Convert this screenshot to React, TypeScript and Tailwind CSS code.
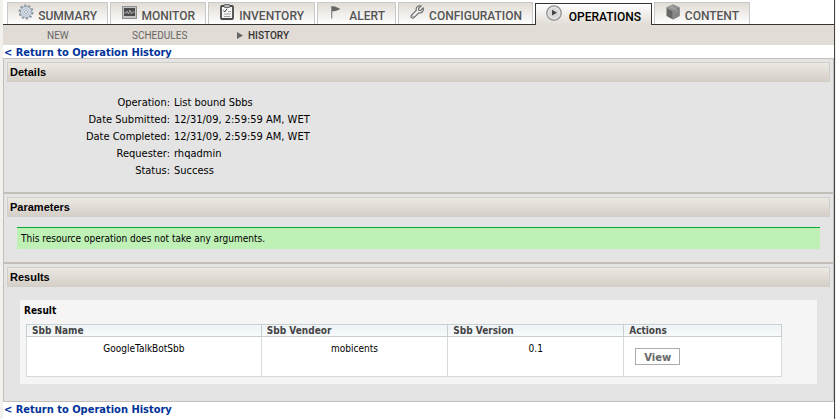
import React from "react";

type Tab = { label: string; icon: React.ReactNode; width: string; active?: boolean };

const GearIcon = () => (
  <svg width="16" height="16" viewBox="0 0 16 16" aria-hidden="true">
    <circle cx="8" cy="8" r="6.6" fill="none" stroke="#8b96a3" strokeWidth="1.8" strokeDasharray="2.4 1.747" />
    <circle cx="8" cy="8" r="5.5" fill="#d3dfec" stroke="#8893a0" strokeWidth="0.8" />
    <circle cx="8" cy="8" r="3.2" fill="#edf3f9" stroke="#a3afbc" strokeWidth="0.8" />
    <circle cx="8" cy="8" r="1.5" fill="#fff" stroke="#7f8994" strokeWidth="0.8" />
  </svg>
);

const MonitorIcon = () => (
  <svg width="15" height="13" viewBox="0 0 15 13" aria-hidden="true">
    <rect x="0.5" y="0.5" width="14" height="12" fill="#c4c4c4" stroke="#8e8e8e" />
    <rect x="2" y="2" width="11" height="8" fill="#4a4a4a" />
    <path d="M2 7h2l1-2 1.5 3L8 4l1.5 4 1-2H13" fill="none" stroke="#bdbdbd" strokeWidth="0.8" />
  </svg>
);

const ClipboardIcon = () => (
  <svg width="14" height="16" viewBox="0 0 14 16" aria-hidden="true">
    <rect x="1" y="2" width="12" height="13" rx="1" fill="#f4f4f4" stroke="#484848" strokeWidth="1.8" />
    <rect x="4" y="0.5" width="6" height="3" rx="1" fill="#b5b5b5" stroke="#555" strokeWidth="0.8" />
    <path d="M3.5 6.5l1.2 1.4L7 4.8" fill="none" stroke="#333" />
    <path d="M8 7.5h3M4 10h6.500M4 12.500h6.500" fill="none" stroke="#a0a0a0" />
  </svg>
);

const FlagIcon = () => (
  <svg width="10" height="14" viewBox="0 0 10 14" aria-hidden="true">
    <path d="M0.7 1v12.5" stroke="#858585" strokeWidth="1.2" />
    <path d="M1 1.200l3 .3 5.500 2.600L5.500 5.800 1 6.400z" fill="#666" />
  </svg>
);

const WrenchIcon = () => (
  <svg width="14" height="14" viewBox="0 0 14 14" aria-hidden="true">
    <path
      d="M11 1L8.500 3.400l.3 1.800 1.900.3L13.100 3c.5 1.500.2 3-.9 4-.9.9-2.200 1.100-3.400.8L4 12.600c-.7.7-1.800.7-2.500.1-.7-.7-.7-1.800 0-2.500L6.300 5.400C5.900 4.200 6.200 3 7.100 2 8.100 1 9.700.5 11 1z"
      fill="#f0f0f0"
      stroke="#666"
      strokeWidth="1.1"
    />
    <circle cx="2.900" cy="11.200" r="0.6" fill="#555" />
  </svg>
);

const PlayIcon = () => (
  <svg width="16" height="16" viewBox="0 0 16 16" aria-hidden="true">
    <circle cx="8" cy="8" r="7.300" fill="#d0d0d0" stroke="#8a8a8a" strokeWidth="1.1" />
    <circle cx="8" cy="8" r="5.600" fill="#d8d8d8" stroke="#eee" strokeWidth="0.8" />
    <path d="M6 4.800L11 7.800 6 10.500z" fill="#444" />
  </svg>
);

const CubeIcon = () => (
  <svg width="14" height="16" viewBox="0 0 14 16" aria-hidden="true">
    <path d="M7 .5L13.500 3.500v8.500L7 15.500.5 12V3.500z" fill="#666" />
    <path d="M7 .5L13.500 3.500 7 7 .5 3.500z" fill="#949494" />
    <path d="M7 7l6.500-3.500V12L7 15.500z" fill="#848484" />
    <path d="M3.500 2.200l6.500 3.200v3" fill="none" stroke="#b5b5b5" strokeWidth="0.8" />
    <path d="M.8 3.700L7 7v8" fill="none" stroke="#aaa" strokeWidth="0.6" />
  </svg>
);

const tabs: Tab[] = [
  { label: "SUMMARY", icon: <GearIcon />, width: "w-[101px]" },
  { label: "MONITOR", icon: <MonitorIcon />, width: "w-[96px]" },
  { label: "INVENTORY", icon: <ClipboardIcon />, width: "w-[107px]" },
  { label: "ALERT", icon: <FlagIcon />, width: "w-[79px]" },
  { label: "CONFIGURATION", icon: <WrenchIcon />, width: "w-[135px]" },
  { label: "OPERATIONS", icon: <PlayIcon />, width: "w-[117px]", active: true },
  { label: "CONTENT", icon: <CubeIcon />, width: "w-[96px]" },
];

const details = [
  ["Operation:", "List bound Sbbs"],
  ["Date Submitted:", "12/31/09, 2:59:59 AM, WET"],
  ["Date Completed:", "12/31/09, 2:59:59 AM, WET"],
  ["Requester:", "rhqadmin"],
  ["Status:", "Success"],
];

const columns = [
  ["Sbb Name", "w-[31.1%]"],
  ["Sbb Vendeor", "w-[24.7%]"],
  ["Sbb Version", "w-[23.3%]"],
  ["Actions", "w-[20.9%]"],
];

function ReturnLink() {
  return (
    <a
      href="#history"
      className="block h-[13px] pl-px font-['DejaVu_Sans_Condensed','DejaVu_Sans',sans-serif] text-[11px] leading-[15px] font-bold text-[#003399]"
    >
      &lt; Return to Operation History
    </a>
  );
}

function SectionHeader({ children }: { children: React.ReactNode }) {
  return (
    <h2 className="mx-[3px] mt-[3px] h-5 border border-[#d2cec7] bg-linear-to-b from-[#ece9e3] to-[#d4cfc7] pl-[2px] font-['Liberation_Sans',sans-serif] text-[11px] leading-[18px] font-bold text-black">
      {children}
    </h2>
  );
}

export default function App() {
  return (
    <div className="bg-[#f3f1ee] pr-px pl-[3px] font-['DejaVu_Sans_Condensed','DejaVu_Sans',sans-serif] text-[10px] text-black">
      <div className="border-r border-[#444] bg-white pb-1">
        <nav aria-label="Resource" className="flex h-[25px] items-end gap-[2px] border-b border-[#333] pl-1">
          {tabs.map((t) => (
            <a
              key={t.label}
              href={"#" + t.label.toLowerCase()}
              aria-current={t.active ? "page" : undefined}
              className={
                "flex h-[22px] shrink-0 items-start justify-between border-x border-t bg-linear-to-b px-[10px] pt-px font-['Roboto',sans-serif] text-[12px] leading-4 font-medium " +
                t.width +
                (t.active
                  ? " -mb-px border-[#333] from-white to-[#e1dcd5] text-black"
                  : " border-[#c9c9c9] from-[#e1dcd5] to-white text-[#555]")
              }
            >
              <span className="flex h-4 w-4 items-center justify-center">{t.icon}</span>
              <span className="pt-1">{t.label}</span>
            </a>
          ))}
        </nav>
        <nav
          aria-label="Operations"
          className="flex h-5 items-center bg-[#e1dcd5] pl-11 font-['Roboto',sans-serif] text-[10px] text-[#666]"
        >
          <a href="#new" className="w-[85px]">NEW</a>
          <a href="#schedules" className="w-[105px]">SCHEDULES</a>
          <a href="#history" aria-current="page" className="flex items-center gap-[5px] font-medium text-[#333]">
            <svg width="6" height="7" viewBox="0 0 6 7" aria-hidden="true">
              <path d="M0 0l6 3.500L0 7z" fill="#666" />
            </svg>
            HISTORY
          </a>
        </nav>
        <ReturnLink />
        <main className="border border-[#c3beb9] bg-[#e4e4e4]">
          <section className="border-b-2 border-[#c3beb9] pb-[13px]">
            <SectionHeader>Details</SectionHeader>
            <dl className="grid grid-cols-[166px_1fr] gap-x-1 pt-3 text-[11px] leading-[17px]">
              {details.map(([k, v]) => (
                <React.Fragment key={k}>
                  <dt className="text-right">{k}</dt>
                  <dd>{v}</dd>
                </React.Fragment>
              ))}
            </dl>
          </section>
          <section className="border-b-2 border-[#c3beb9] pb-[13px]">
            <SectionHeader>Parameters</SectionHeader>
            <p className="mx-[13px] mt-[10px] border-t border-[#00aa33] bg-[#bff0b5] px-1 py-1 leading-[13px]">
              This resource operation does not take any arguments.
            </p>
          </section>
          <section className="pb-[17px]">
            <SectionHeader>Results</SectionHeader>
            <div className="mx-4 mt-[13px] bg-[#f5f5f5] pt-1 pr-[35px] pb-[7px] pl-[6px]">
              <table className="w-full table-fixed border-collapse">
                <caption className="-ml-[2px] pb-[7px] text-left leading-[13px] font-bold">Result</caption>
                <thead>
                  <tr>
                    {columns.map(([c, w]) => (
                      <th
                        key={c}
                        scope="col"
                        className={"h-3 border border-[#c8cfd1] bg-linear-to-b from-[#edf2f5] to-[#f7fbfd] p-0 pl-[5px] text-left text-[10px] leading-[11px] font-bold text-[#444] " + w}
                      >
                        {c}
                      </th>
                    ))}
                  </tr>
                </thead>
                <tbody>
                  <tr className="h-10 bg-white text-center align-top leading-[13px]">
                    <td className="border border-[#d5dadc] pt-[5px]">GoogleTalkBotSbb</td>
                    <td className="border border-[#d5dadc] pt-[5px]">mobicents</td>
                    <td className="border border-[#d5dadc] pt-[5px]">0.1</td>
                    <td className="border border-[#d5dadc] pt-[11px] pl-[11px] text-left">
                      <button
                        type="button"
                        className="block h-[17px] w-[45px] border border-[#aaa] bg-white font-['DejaVu_Sans',sans-serif] text-[10px] leading-[17px] font-bold text-[#666]"
                      >
                        View
                      </button>
                    </td>
                  </tr>
                </tbody>
              </table>
            </div>
          </section>
        </main>
        <ReturnLink />
      </div>
    </div>
  );
}
